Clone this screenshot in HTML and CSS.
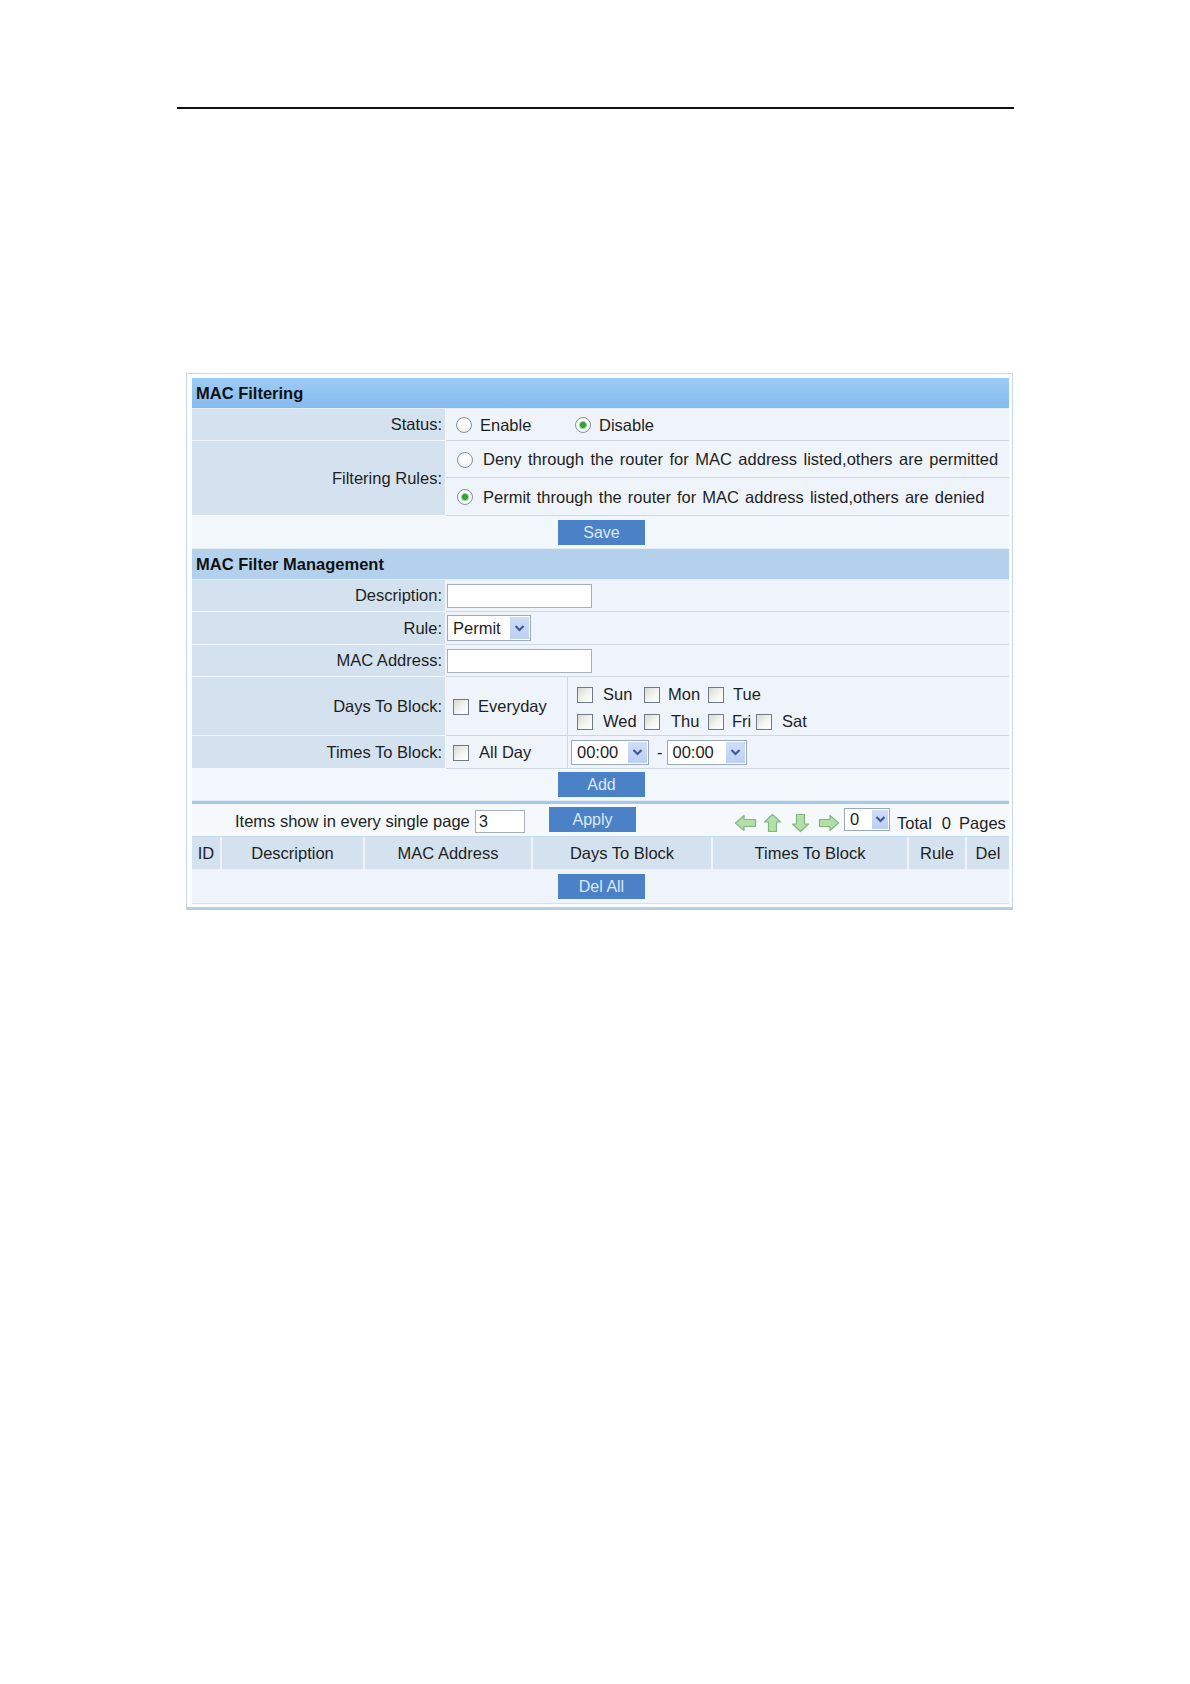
FILE: index.html
```html
<!DOCTYPE html>
<html>
<head>
<meta charset="utf-8">
<title>MAC Filtering</title>
<link rel="stylesheet" href="styles.css">
</head>
<body>
<div class="page">
  <div class="topline"></div>
  <div class="panel">
    <table class="form">
      <colgroup><col class="c1"><col class="c2"><col class="c3"></colgroup>
      <tr class="hd"><td colspan="3">MAC Filtering</td></tr>
      <tr class="r32">
        <td class="lbl">Status:</td>
        <td class="val pl10" colspan="2">
          <label class="opt w119"><input class="rd" type="radio" name="st"><span class="t8">Enable</span></label><label class="opt"><input class="rd" type="radio" name="st" checked><span class="t8">Disable</span></label>
        </td>
      </tr>
      <tr class="r37">
        <td class="lbl" rowspan="2">Filtering Rules:</td>
        <td class="val pl11" colspan="2"><label class="opt"><input class="rd" type="radio" name="fr"><span class="t10 wide">Deny through the router for MAC address listed,others are permitted</span></label></td>
      </tr>
      <tr class="r38">
        <td class="val pl11" colspan="2"><label class="opt"><input class="rd" type="radio" name="fr" checked><span class="t10 wide2">Permit through the router for MAC address listed,others are denied</span></label></td>
      </tr>
      <tr class="r33"><td class="btnrow" colspan="3"><button class="btn">Save</button></td></tr>
      <tr class="hd hd2"><td colspan="3">MAC Filter Management</td></tr>
      <tr class="r32">
        <td class="lbl">Description:</td>
        <td class="val pl1" colspan="2"><input class="txt txt-long" type="text"></td>
      </tr>
      <tr class="r33">
        <td class="lbl">Rule:</td>
        <td class="val pl1" colspan="2"><span class="sel sel-rule"><span class="sv">Permit</span><span class="arr"><svg width="11" height="9" viewBox="0 0 11 9"><polyline points="1.5,2 5.5,6 9.5,2" fill="none" stroke="#3f5b98" stroke-width="2.2"/></svg></span></span></td>
      </tr>
      <tr class="r32">
        <td class="lbl">MAC Address:</td>
        <td class="val pl1" colspan="2"><input class="txt txt-long" type="text"></td>
      </tr>
      <tr class="r58">
        <td class="lbl">Days To Block:</td>
        <td class="val sub pl7"><label class="opt"><input class="cb" type="checkbox"><span class="t9">Everyday</span></label></td>
        <td class="val pl9">
          <div class="days">
            <label class="opt"><input class="cb" type="checkbox"><span class="t10">Sun</span></label>
            <label class="opt"><input class="cb" type="checkbox"><span class="t8">Mon</span></label>
            <label class="opt span2"><input class="cb" type="checkbox"><span class="t9">Tue</span></label>
            <label class="opt"><input class="cb" type="checkbox"><span class="t10">Wed</span></label>
            <label class="opt"><input class="cb" type="checkbox"><span class="t11">Thu</span></label>
            <label class="opt"><input class="cb" type="checkbox"><span class="t8">Fri</span></label>
            <label class="opt"><input class="cb" type="checkbox"><span class="t10">Sat</span></label>
          </div>
        </td>
      </tr>
      <tr class="r33">
        <td class="lbl">Times To Block:</td>
        <td class="val sub pl7"><label class="opt"><input class="cb" type="checkbox"><span class="t10">All Day</span></label></td>
        <td class="val pl3">
          <span class="sel sel-time"><span class="sv">00:00</span><span class="arr"><svg width="11" height="9" viewBox="0 0 11 9"><polyline points="1.5,2 5.5,6 9.5,2" fill="none" stroke="#3f5b98" stroke-width="2.2"/></svg></span></span><span class="dash">-</span><span class="sel sel-time2"><span class="sv">00:00</span><span class="arr"><svg width="11" height="9" viewBox="0 0 11 9"><polyline points="1.5,2 5.5,6 9.5,2" fill="none" stroke="#3f5b98" stroke-width="2.2"/></svg></span></span>
        </td>
      </tr>
      <tr class="r32"><td class="btnrow" colspan="3"><button class="btn">Add</button></td></tr>
    </table>

    <div class="itembar">
      <span class="items-lbl">Items show in every single page</span>
      <input class="txt txt-num" type="text" value="3">
      <button class="btn btn-apply">Apply</button>
      <span class="nav">
        <svg class="ic" width="23" height="20" viewBox="0 0 23 20"><path d="M1.5 10 L10 2.5 V6.5 H21.5 V13.5 H10 V17.5 Z" fill="#b4dfaa" stroke="#82b57f" stroke-width="1.2" stroke-linejoin="round"/></svg>
        <svg class="ic ic-up" width="19" height="20" viewBox="0 0 19 20"><path d="M9.5 1.5 L17.5 9 H13.5 V18.5 H5.5 V9 H1.5 Z" fill="#b4dfaa" stroke="#82b57f" stroke-width="1.2" stroke-linejoin="round"/></svg>
        <svg class="ic ic-down" width="21" height="20" viewBox="0 0 21 20"><path d="M10.5 18.5 L18.5 11 H14.5 V1.5 H6.5 V11 H2.5 Z" fill="#b4dfaa" stroke="#82b57f" stroke-width="1.2" stroke-linejoin="round"/></svg>
        <svg class="ic ic-right" width="22" height="20" viewBox="0 0 22 20"><path d="M20.5 10 L12 2.5 V6.5 H1.5 V13.5 H12 V17.5 Z" fill="#b4dfaa" stroke="#82b57f" stroke-width="1.2" stroke-linejoin="round"/></svg>
      </span>
      <span class="sel sel-page"><span class="sv">0</span><span class="arr"><svg width="11" height="9" viewBox="0 0 11 9"><polyline points="1.5,2 5.5,6 9.5,2" fill="none" stroke="#3f5b98" stroke-width="2.2"/></svg></span></span>
      <span class="total">Total<span class="pg">0</span>Pages</span>
    </div>

    <table class="list">
      <colgroup><col class="l1"><col class="l2"><col class="l3"><col class="l4"><col class="l5"><col class="l6"><col class="l7"></colgroup>
      <tr class="lh">
        <td>ID</td><td>Description</td><td>MAC Address</td><td>Days To Block</td><td>Times To Block</td><td>Rule</td><td class="last">Del</td>
      </tr>
      <tr class="ld"><td colspan="7"><button class="btn">Del All</button></td></tr>
    </table>
  </div>
</div>
</body>
</html>
```

FILE: styles.css
```css
* { box-sizing: border-box; }

body {
  margin: 0;
  background: #ffffff;
  font-family: "Liberation Sans", Arial, sans-serif;
  font-size: 16.5px;
  color: #1e1e1e;
}

.page {
  width: 1190px;
  min-height: 1684px;
  padding-top: 107px;
}

.topline {
  margin-left: 177px;
  width: 837px;
  border-top: 2px solid #111111;
}

.panel {
  margin: 264px 0 0 186px;
  width: 827px;
  border: 1px solid #c6dadf;
  border-bottom: 3px solid #b3cfe9;
  padding: 4px 3px 3px 5px;
  background: #fbfdfe;
}

table {
  border-collapse: separate;
  border-spacing: 0;
  width: 817px;
  table-layout: fixed;
}

td {
  padding: 0;
  white-space: nowrap;
  vertical-align: middle;
}

.form col.c1 { width: 254px; }
.form col.c2 { width: 122px; }
.form col.c3 { width: 441px; }

.hd td {
  height: 31px;
  background: linear-gradient(#9dcbf6, #87bbee);
  font-weight: bold;
  padding-left: 4px;
  color: #111111;
  border-bottom: 1px solid #e4eef7;
}

.hd2 td {
  background: #b3d1ed;
}

.r32 td { height: 32px; }
.r33 td { height: 33px; }
.r37 td { height: 37px; }
.r38 td { height: 38px; }
.r58 td { height: 58px; }

.lbl {
  background: #d4e2ef;
  text-align: right;
  padding-right: 3px;
  border-bottom: 1px solid #f1f6fa;
  border-right: 1px solid #f1f6fa;
}

.val {
  background: #eef4fa;
  border-bottom: 1px solid #cfd8e0;
}

.val.sub {
  border-right: 1px solid #cfd8e0;
}

.pl1 { padding-left: 1px; }
.pl3 { padding-left: 3px; }
.pl7 { padding-left: 7px; }
.pl9 { padding-left: 9px; }
.pl10 { padding-left: 10px; }
.pl11 { padding-left: 11px; }

.btnrow {
  background: #f2f7fb;
  text-align: center;
  border-bottom: 1px solid #e4edf5;
}

.btn {
  display: inline-block;
  width: 87px;
  height: 25px;
  padding: 0;
  border: 0;
  background: #4b81c6;
  color: #dce8f5;
  font-family: inherit;
  font-size: 16px;
  line-height: 25px;
  text-align: center;
  vertical-align: middle;
  margin-left: 2px;
}

.opt {
  display: inline-flex;
  align-items: center;
  vertical-align: middle;
}

.w119 { width: 119px; }

.t8 { margin-left: 8px; }
.t9 { margin-left: 9px; }
.t10 { margin-left: 10px; }
.t11 { margin-left: 11px; }

.wide { word-spacing: 1.9px; }
.wide2 { word-spacing: 1.5px; }

input.rd {
  appearance: none;
  -webkit-appearance: none;
  width: 16px;
  height: 16px;
  margin: 0;
  border: 1px solid #8694a2;
  border-radius: 50%;
  background: radial-gradient(circle at 50% 35%, #ffffff 30%, #e3e5e1 100%);
  flex: none;
}

input.rd:checked {
  background: radial-gradient(circle, #35a035 0, #35a035 2.5px, #93d393 3.5px, #ffffff 4.5px, #e6e8e4 100%);
}

input.cb {
  appearance: none;
  -webkit-appearance: none;
  width: 16px;
  height: 16px;
  margin: 0;
  border: 1px solid #6f7b86;
  background: linear-gradient(135deg, #dadad4, #f6f6f3 60%, #ffffff);
  flex: none;
}

input.txt {
  margin: 0;
  border: 1px solid #a6aeb6;
  background: #ffffff;
  font-family: inherit;
  font-size: 16px;
  padding: 0 3px;
  vertical-align: middle;
  color: #1e1e1e;
}

.txt-long { width: 145px; height: 24px; }
.txt-num { width: 50px; height: 23px; }

.sel {
  display: inline-flex;
  align-items: stretch;
  justify-content: space-between;
  vertical-align: middle;
  border: 1px solid #9aa9b8;
  background: #ffffff;
  padding: 1px;
}

.sel .sv {
  display: flex;
  align-items: center;
  padding-left: 4px;
}

.sel .arr {
  width: 19px;
  background: linear-gradient(#cfdcf9, #bccff5);
  display: flex;
  align-items: center;
  justify-content: center;
}

.sel-rule { width: 84px; height: 26px; }
.sel-time { width: 78px; height: 25px; }
.sel-time2 { width: 80px; height: 25px; }
.sel-page { width: 46px; height: 23px; }
.sel-page .arr { width: 16px; }

.dash {
  display: inline-block;
  margin: 0 4px 0 8px;
  vertical-align: middle;
}

.days {
  display: grid;
  grid-template-columns: 67px 64px 48px auto;
  grid-auto-rows: 27px;
  align-items: center;
  margin-top: 4px;
}

.days .span2 { grid-column: 3 / span 2; }

.itembar {
  display: flex;
  align-items: center;
  height: 36px;
  padding-top: 3px;
  border-top: 3px solid #a7c9e9;
  border-bottom: 1px solid #c5d9ec;
  background: #f5f9fc;
  white-space: nowrap;
  overflow: hidden;
}

.items-lbl {
  margin-left: 43px;
  width: 240px;
  flex: none;
}

.btn-apply { margin-left: 24px; margin-top: -4px; flex: none; }

.txt-num { margin-top: -1px; }

.nav {
  display: flex;
  align-items: center;
  margin-left: 98px;
  margin-top: 3px;
  flex: none;
}

.ic { display: block; }
.ic-up { margin-left: 6px; }
.ic-down { margin-left: 8px; }
.ic-right { margin-left: 7px; }

.sel-page { margin-left: 4px; margin-top: -5px; flex: none; }

.total {
  margin-left: 7px;
  margin-top: 4px;
  flex: none;
}

.pg { margin: 0 8px 0 10px; }

.list col.l1 { width: 30px; }
.list col.l2 { width: 143px; }
.list col.l3 { width: 168px; }
.list col.l4 { width: 180px; }
.list col.l5 { width: 196px; }
.list col.l6 { width: 58px; }
.list col.l7 { width: 42px; }

.lh td {
  height: 33px;
  background: #d4e2ef;
  text-align: center;
  border-right: 2px solid #eef4f9;
  border-bottom: 1px solid #e9f1f8;
}

.lh td.last { border-right: 0; }

.ld td {
  height: 34px;
  background: #eef4fa;
  text-align: center;
  border-bottom: 1px solid #d6e1ea;
}
```
